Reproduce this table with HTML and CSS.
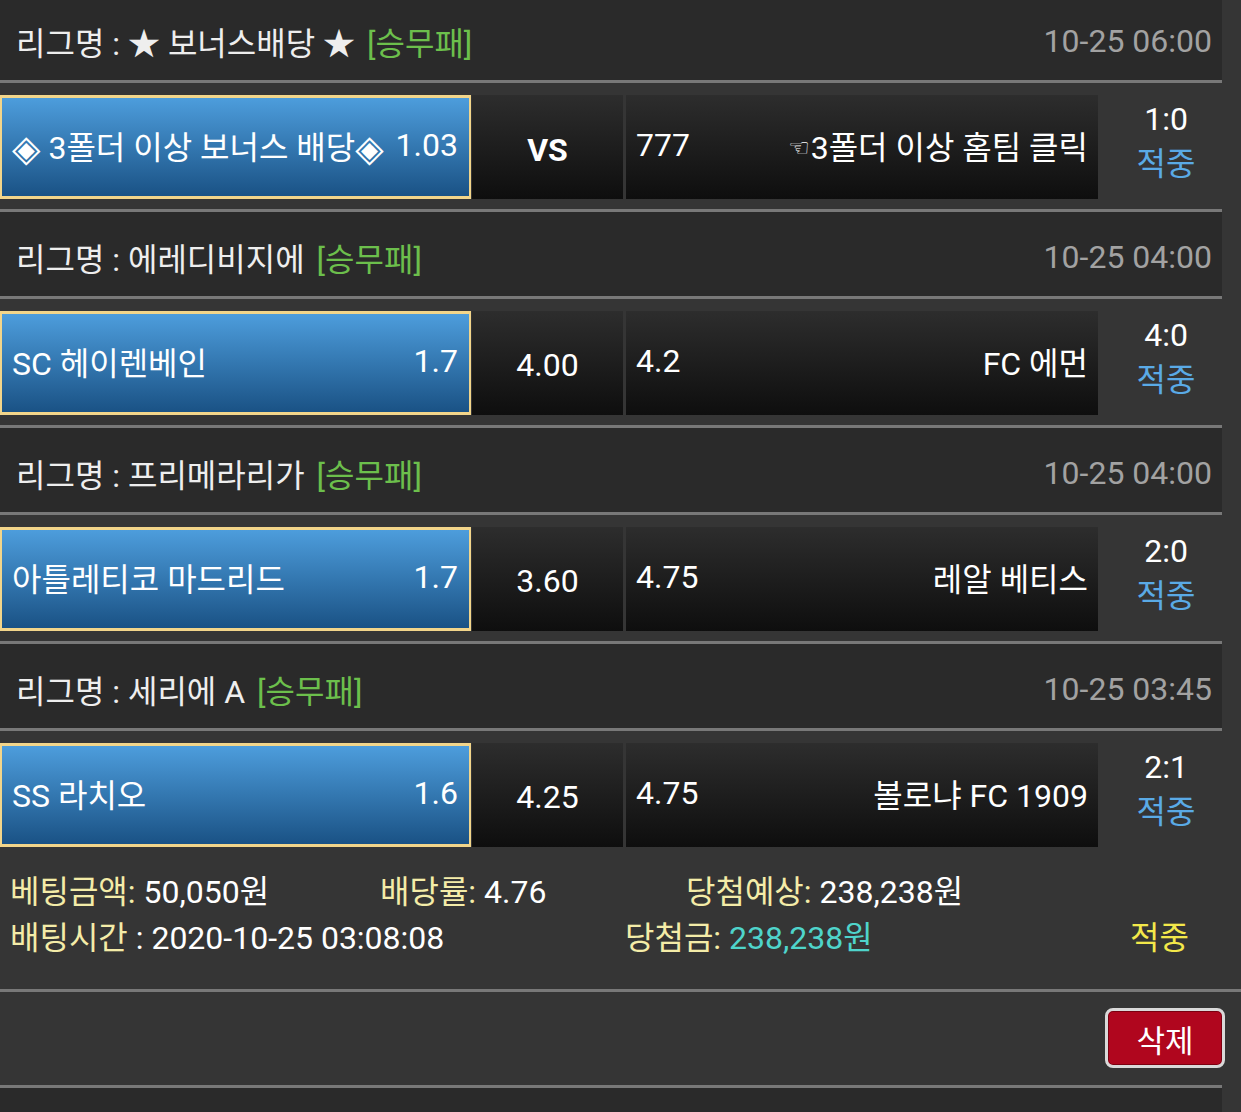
FILE: index.html
```html
<!DOCTYPE html>
<html lang="ko">
<head>
    <meta charset="UTF-8">
    <title>배팅내역</title>
    <meta name="viewport" content="width=device-width, initial-scale=1.0">
    <link rel="stylesheet" href="styles.css">
</head>
<body>
    <div class="bet">
        <div class="game first">
            <div class="league">
                <span class="name">리그명 : ★ 보너스배당 ★</span>
                <span class="type">[승무패]</span>
                <span class="time">10-25 06:00</span>
            </div>
            <div class="match">
                <div class="pick home"><span class="team"><span class="sym">◈</span> 3폴더 이상 보너스 배당<span class="sym">◈</span></span><span class="odd">1.03</span></div>
                <div class="pick draw vs">VS</div>
                <div class="pick away"><span class="odd">777</span><span class="team"><span class="hand">☜</span>3폴더 이상 홈팀 클릭</span></div>
                <div class="result"><span>1:0</span><span class="hit">적중</span></div>
            </div>
        </div>
        <div class="game">
            <div class="league">
                <span class="name">리그명 : 에레디비지에</span>
                <span class="type">[승무패]</span>
                <span class="time">10-25 04:00</span>
            </div>
            <div class="match">
                <div class="pick home"><span class="team">SC 헤이렌베인</span><span class="odd">1.7</span></div>
                <div class="pick draw">4.00</div>
                <div class="pick away"><span class="odd">4.2</span><span class="team">FC 에먼</span></div>
                <div class="result"><span>4:0</span><span class="hit">적중</span></div>
            </div>
        </div>
        <div class="game">
            <div class="league">
                <span class="name">리그명 : 프리메라리가</span>
                <span class="type">[승무패]</span>
                <span class="time">10-25 04:00</span>
            </div>
            <div class="match">
                <div class="pick home"><span class="team">아틀레티코 마드리드</span><span class="odd">1.7</span></div>
                <div class="pick draw">3.60</div>
                <div class="pick away"><span class="odd">4.75</span><span class="team">레알 베티스</span></div>
                <div class="result"><span>2:0</span><span class="hit">적중</span></div>
            </div>
        </div>
        <div class="game">
            <div class="league">
                <span class="name">리그명 : 세리에 A</span>
                <span class="type">[승무패]</span>
                <span class="time">10-25 03:45</span>
            </div>
            <div class="match">
                <div class="pick home"><span class="team">SS 라치오</span><span class="odd">1.6</span></div>
                <div class="pick draw">4.25</div>
                <div class="pick away"><span class="odd">4.75</span><span class="team">볼로냐 FC 1909</span></div>
                <div class="result"><span>2:1</span><span class="hit">적중</span></div>
            </div>
        </div>

        <div class="summary">
            <div class="row row-1">
                <div class="cell"><span class="label">베팅금액:</span> 50,050원</div>
                <div class="cell"><span class="label">배당률:</span> 4.76</div>
                <div class="cell"><span class="label">당첨예상:</span> 238,238원</div>
            </div>
            <div class="row row-2">
                <div class="cell"><span class="label">배팅시간</span> : 2020-10-25 03:08:08</div>
                <div class="cell"><span class="label">당첨금:</span> <span class="win">238,238원</span></div>
                <div class="cell state">적중</div>
            </div>
        </div>
        <div class="actions">
            <button class="del-btn">삭제</button>
        </div>
    </div>
    <div class="game">
        <div class="league"></div>
    </div>
</body>
</html>
```

FILE: styles.css
```css
:root {
    --bg: #353535;
    --head-bg: #2a2a2a;
    --line: #787878;
    --label: #f4eca8;
    --green: #6cbf4c;
    --blue: #5aaae6;
}
html, body {
    margin: 0;
    padding: 0;
    background: var(--bg);
    color: #fff;
    font-family: Roboto, "Noto Sans CJK KR", sans-serif;
    font-size: 32px;
    overflow: hidden;
}
.game.first {
    margin-top: -7px;
}
.league {
    width: 1222px;
    box-sizing: border-box;
    height: 90px;
    background: var(--head-bg);
    border-top: 3px solid var(--line);
    border-bottom: 3px solid var(--line);
    display: flex;
    align-items: center;
    padding: 6px 10px 0 16px;
    color: #eee;
}
.league .type {
    color: var(--green);
    margin-left: 12px;
}
.league .time {
    margin-left: auto;
    color: #a2a2a2;
}
.match {
    display: flex;
    padding: 12px 0 10px 0;
}
.pick {
    height: 104px;
    box-sizing: border-box;
    display: flex;
    align-items: center;
    background: linear-gradient(to bottom, #2d2d2d, #0e0e0e);
}
.pick.home {
    width: 471px;
    background: linear-gradient(to bottom, #4d9ddc, #1a5285);
    border: 2px solid #f2d58a;
    border-width: 3px 2px;
    padding: 0 11px 4px 10px;
    justify-content: space-between;
}
.sym {
    font-family: "DejaVu Sans", sans-serif;
    font-size: 37px;
    line-height: 1;
    vertical-align: -2px;
}
.pick.draw {
    width: 151px;
    margin-left: 1px;
    justify-content: center;
    padding-top: 4px;
}
.pick.draw.vs {
    font-weight: bold;
    padding-top: 6px;
}
.pick.away {
    width: 472px;
    margin-left: 3px;
    padding: 0 10px 4px 10px;
    justify-content: space-between;
}
.hand {
    font-family: "DejaVu Sans", sans-serif;
    font-size: 24px;
    margin-right: 1px;
    vertical-align: 3px;
}
.result {
    width: 136px;
    display: flex;
    flex-direction: column;
    align-items: center;
    justify-content: center;
    line-height: 45px;
    padding-bottom: 10px;
}
.result .hit {
    color: var(--blue);
}
.summary {
    padding: 12px 0 28px 10px;
    border-bottom: 3px solid var(--line);
    line-height: 46px;
}
.row {
    display: flex;
}
.row-1 .cell:nth-child(1) { width: 370px; }
.row-1 .cell:nth-child(2) { width: 306px; }
.row-2 .cell:nth-child(1) { width: 615px; }
.row-2 .cell:nth-child(2) { width: 505px; }
.label {
    color: var(--label);
}
.win {
    color: #4fd4cb;
}
.state {
    color: #f3e84a;
}
.actions {
    display: flex;
    justify-content: flex-end;
    padding: 16px 16px 17px 0;
}
.del-btn {
    width: 120px;
    height: 60px;
    background: #b0061e;
    color: #fff;
    border: 3px solid #d9d9d9;
    border-radius: 8px;
    box-shadow: inset 0 0 0 1px #7a0010;
    font-family: inherit;
    font-size: 31px;
    padding: 0;
    cursor: pointer;
}
```
